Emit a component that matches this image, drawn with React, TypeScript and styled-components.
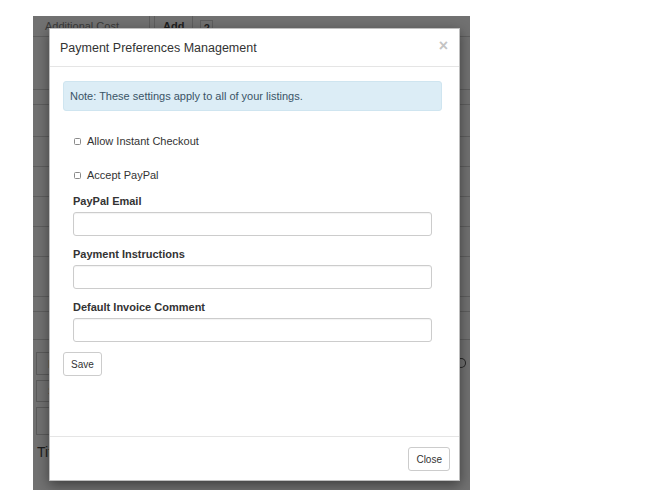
import React from 'react';
import styled, { createGlobalStyle } from 'styled-components';

const GlobalStyle = createGlobalStyle`
  html, body {
    margin: 0;
    padding: 0;
    background: #ffffff;
    font-family: "Liberation Sans", Arial, sans-serif;
  }
  * {
    box-sizing: border-box;
  }
`;

const Frame = styled.div`
  position: relative;
  margin: 16px 0 0 33px;
  width: 437px;
  height: 474px;
  background: #717171;
  overflow: hidden;
`;

const PageRow = styled.div<{ $h: number }>`
  height: ${(p) => p.$h}px;
  border-bottom: 1px solid #5e5e5e;
  display: flex;
  align-items: center;
`;

const PageCell = styled.div<{ $w?: number }>`
  width: ${(p) => (p.$w ? `${p.$w}px` : 'auto')};
  height: 100%;
  display: flex;
  align-items: center;
  padding-left: 12px;
  font-size: 11px;
  color: #3a3a3a;
  border-right: 1px solid #5e5e5e;
`;

const PageButton = styled.div`
  height: 100%;
  margin-left: 4px;
  padding: 0 8px;
  display: flex;
  align-items: center;
  font-size: 11px;
  font-weight: 700;
  color: #1e1e1e;
  border-left: 1px solid #5e5e5e;
  border-right: 1px solid #5e5e5e;
`;

const PageQuestion = styled.div`
  margin-left: 7px;
  width: 13px;
  height: 17px;
  margin-top: 4px;
  border: 1px solid #5e5e5e;
  font-size: 10px;
  font-weight: 700;
  color: #1e1e1e;
  display: flex;
  align-items: center;
  justify-content: center;
`;

const PageBoxes = styled.div`
  padding: 12px 0 0 3px;
  display: flex;
  flex-direction: column;
  gap: 5px;
`;

const PageBox = styled.div<{ $h: number }>`
  width: 40px;
  height: ${(p) => p.$h}px;
  border: 1px solid #5a5a5a;
  font-size: 11px;
  color: #3a3a3a;
  padding-left: 11px;
  display: flex;
  align-items: center;
`;

const PageHeading = styled.div`
  padding: 9px 0 0 4px;
  font-size: 14px;
  color: #1c1c1c;
`;

const PageIcon = styled.div`
  position: absolute;
  right: 4px;
  top: 342px;
  width: 10px;
  height: 10px;
  border: 1.5px solid #262626;
  border-left-color: transparent;
  border-radius: 50%;
`;

const Modal = styled.div`
  position: absolute;
  left: 16px;
  top: 12px;
  width: 411px;
  height: 453px;
  background: #ffffff;
  border: 1px solid rgba(0, 0, 0, 0.25);
  box-shadow: 0 4px 12px rgba(0, 0, 0, 0.45);
  display: flex;
  flex-direction: column;
`;

const ModalHeader = styled.div`
  height: 38px;
  padding: 0 11px 0 10px;
  display: flex;
  align-items: center;
  justify-content: space-between;
  border-bottom: 1px solid #e5e5e5;
`;

const Title = styled.h4`
  margin: 0;
  font-size: 12.5px;
  font-weight: 400;
  color: #333333;
`;

const CloseX = styled.button`
  border: none;
  background: none;
  padding: 0 0 3px 0;
  font-family: "Liberation Sans", Arial, sans-serif;
  font-size: 16px;
  font-weight: 700;
  line-height: 1;
  color: #c4c4c4;
  cursor: pointer;
`;

const ModalBody = styled.div`
  flex: 1;
  padding: 14px 17px 0 13px;
`;

const Alert = styled.div`
  height: 30px;
  padding: 0 6px;
  display: flex;
  align-items: center;
  background: #dcedf6;
  border: 1px solid #cfe5f0;
  border-radius: 3px;
  font-size: 11px;
  color: #3a5466;
`;

const Form = styled.form`
  padding: 13px 10px 0;
`;

const CheckRow = styled.label`
  height: 34px;
  display: flex;
  align-items: center;
  gap: 6px;
  font-size: 11px;
  color: #333333;
`;

const CheckBox = styled.input.attrs({ type: 'checkbox' })`
  margin: 0 0 0 1px;
  width: 7px;
  height: 7px;
  appearance: none;
  border: 1px solid #8a8a8a;
  border-radius: 1.5px;
  background: #ffffff;
`;

const Fields = styled.div`
  padding-top: 2px;
`;

const Group = styled.div`
  margin-bottom: 11px;
`;

const Label = styled.label`
  display: block;
  height: 14px;
  line-height: 14px;
  margin-bottom: 4px;
  font-size: 11px;
  font-weight: 700;
  color: #333333;
`;

const TextInput = styled.input`
  display: block;
  width: 100%;
  height: 24px;
  border: 1px solid #cccccc;
  border-radius: 3px;
  background: #ffffff;
  box-shadow: inset 0 1px 1px rgba(0, 0, 0, 0.05);
`;

const Button = styled.button`
  height: 24px;
  padding: 0 7px;
  background: #ffffff;
  border: 1px solid #cccccc;
  border-radius: 3px;
  font-family: "Liberation Sans", Arial, sans-serif;
  font-size: 10px;
  color: #333333;
`;

const SaveRow = styled.div`
  margin-top: -1px;
`;

const ModalFooter = styled.div`
  height: 44px;
  padding: 10px 9px 0 0;
  display: flex;
  justify-content: flex-end;
  align-items: flex-start;
  border-top: 1px solid #e5e5e5;
`;

const pageRows = [53, 15, 32, 30, 30, 30, 30, 40, 15, 28];

const fields = ['PayPal Email', 'Payment Instructions', 'Default Invoice Comment'];

export default function App() {
  return (
    <>
      <GlobalStyle />
      <Frame>
        <PageRow $h={21}>
          <PageCell $w={117}>Additional Cost</PageCell>
          <PageButton>Add</PageButton>
          <PageQuestion>?</PageQuestion>
        </PageRow>
        {pageRows.map((h, i) => (
          <PageRow key={i} $h={h} />
        ))}
        <PageBoxes>
          <PageBox $h={23}>D</PageBox>
          <PageBox $h={22}>S</PageBox>
          <PageBox $h={28} />
        </PageBoxes>
        <PageHeading>Title</PageHeading>
        <PageIcon />

        <Modal>
          <ModalHeader>
            <Title>Payment Preferences Management</Title>
            <CloseX type="button" aria-label="Close">×</CloseX>
          </ModalHeader>
          <ModalBody>
            <Alert>Note: These settings apply to all of your listings.</Alert>
            <Form onSubmit={(e) => e.preventDefault()}>
              <CheckRow>
                <CheckBox />
                Allow Instant Checkout
              </CheckRow>
              <CheckRow>
                <CheckBox />
                Accept PayPal
              </CheckRow>
              <Fields>
                {fields.map((f) => (
                  <Group key={f}>
                    <Label>{f}</Label>
                    <TextInput type="text" />
                  </Group>
                ))}
              </Fields>
            </Form>
            <SaveRow>
              <Button type="button">Save</Button>
            </SaveRow>
          </ModalBody>
          <ModalFooter>
            <Button type="button">Close</Button>
          </ModalFooter>
        </Modal>
      </Frame>
    </>
  );
}
